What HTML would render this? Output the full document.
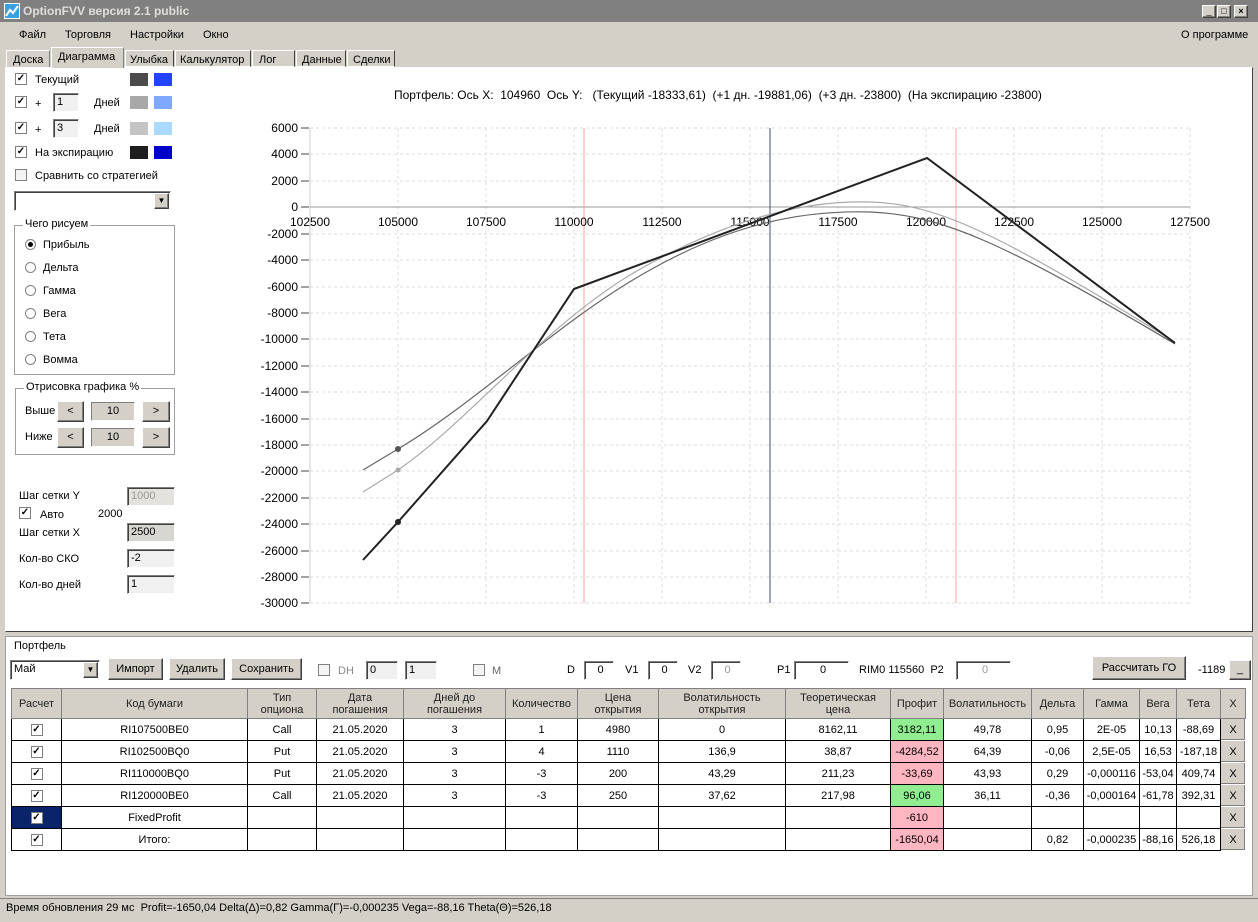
<!DOCTYPE html>
<html><head><meta charset="utf-8"><style>
*{box-sizing:border-box;margin:0;padding:0}
body{width:1258px;height:922px;background:#d4d0c8;font-family:"Liberation Sans",sans-serif;font-size:11px;color:#000;position:relative;overflow:hidden}
.a{position:absolute;white-space:nowrap}
.cb{position:absolute;width:12px;height:12px;border:1px solid #808080;background:#fff;font-size:10px;line-height:10px;text-align:center;font-weight:bold}
.rb{position:absolute;width:11px;height:11px;border:1px solid #808080;border-radius:50%;background:#fff}
.in{position:absolute;background:#fff;border:1px solid;border-color:#808080 #fff #fff #808080;box-shadow:inset 1px 1px 0 #404040;padding-left:3px;line-height:16px;height:19px}
.btn{position:absolute;background:#d4d0c8;border:1px solid;border-color:#fff #404040 #404040 #fff;box-shadow:inset -1px -1px 0 #808080;text-align:center}
.grp{position:absolute;border:1px solid #a0a0a0;box-shadow:1px 1px 0 #fff}
.grp span{position:absolute;top:-8px;left:8px;background:#fff;padding:0 2px}
table{border-collapse:collapse;position:absolute;left:11px;top:688px;table-layout:fixed;background:#fff}
td{border:1px solid #000;text-align:center;height:22px;font-size:11px;overflow:hidden;white-space:nowrap}
tr.h td{height:30px;background:#d4d0c8;border-color:#808080;line-height:12px;color:#222}
.g{background:#90ee90}.r{background:#ffb6c1}
.x{background:#d4d0c8;border:1px solid #fff;box-shadow:inset -1px -1px 0 #808080}
.tc{display:inline-block;width:12px;height:12px;border:1px solid #808080;background:#fff;font-size:10px;line-height:10px;font-weight:bold;color:#000;vertical-align:middle}
</style></head><body>
<div class="a" style="left:0;top:0;width:1258px;height:22px;background:#808080"></div>
<div class="a" style="left:4px;top:3px;width:16px;height:16px;background:#3aa0e0;border:1px solid #fff"><svg width="14" height="14"><polyline points="1,12 5,6 8,9 13,2" stroke="#fff" stroke-width="2" fill="none"/></svg></div>
<div class="a" style="left:23px;top:4px;color:#e0ddd6;font-weight:bold;font-size:12px">OptionFVV версия 2.1 public</div>
<div class="btn" style="left:1202px;top:5px;width:14px;height:13px;font-size:9px;line-height:10px">_</div>
<div class="btn" style="left:1217px;top:5px;width:14px;height:13px;font-size:9px;line-height:10px">□</div>
<div class="btn" style="left:1234px;top:5px;width:14px;height:13px;font-size:9px;line-height:11px;font-weight:bold">×</div>
<div class="a" style="left:19px;top:29px">Файл</div>
<div class="a" style="left:65px;top:29px">Торговля</div>
<div class="a" style="left:130px;top:29px">Настройки</div>
<div class="a" style="left:203px;top:29px">Окно</div>
<div class="a" style="left:1181px;top:29px">О программе</div>
<div class="a" style="left:6px;top:50px;width:44px;height:17px;border:1px solid #fff;border-bottom:0;border-right-color:#808080;padding:3px 0 0 6px">Доска</div>
<div class="a" style="left:51px;top:47px;width:73px;height:21px;border:1px solid #fff;border-bottom:0;border-right-color:#808080;background:#d4d0c8;padding:3px 0 0 6px;z-index:2">Диаграмма</div>
<div class="a" style="left:125px;top:50px;width:49px;height:17px;border:1px solid #fff;border-right-color:#404040;padding:3px 0 0 4px">Улыбка</div>
<div class="a" style="left:175px;top:50px;width:76px;height:17px;border:1px solid #fff;border-right-color:#404040;padding:3px 0 0 4px">Калькулятор</div>
<div class="a" style="left:252px;top:50px;width:43px;height:17px;border:1px solid #fff;border-right-color:#404040;padding:3px 0 0 6px">Лог</div>
<div class="a" style="left:296px;top:50px;width:50px;height:17px;border:1px solid #fff;border-right-color:#404040;padding:3px 0 0 5px">Данные</div>
<div class="a" style="left:347px;top:50px;width:48px;height:17px;border:1px solid #fff;border-right-color:#404040;padding:3px 0 0 5px">Сделки</div>
<div class="a" style="left:5px;top:67px;width:1248px;height:565px;background:#fff;border:1px solid;border-color:#fff #404040 #404040 #fff"></div>
<div class="cb" style="left:15px;top:73px">✓</div><div class="a" style="left:35px;top:74px">Текущий</div>
<div class="a" style="left:130px;top:73px;width:18px;height:13px;background:#4b4b4b"></div><div class="a" style="left:154px;top:73px;width:18px;height:13px;background:#2244ff"></div>
<div class="cb" style="left:15px;top:96px">✓</div><div class="a" style="left:35px;top:98px">+</div>
<div class="in" style="left:53px;top:93px;width:26px;background:#f0f0f0">1</div><div class="a" style="left:94px;top:97px">Дней</div>
<div class="a" style="left:130px;top:96px;width:18px;height:13px;background:#a8a8a8"></div><div class="a" style="left:154px;top:96px;width:18px;height:13px;background:#7fa8ff"></div>
<div class="cb" style="left:15px;top:122px">✓</div><div class="a" style="left:35px;top:124px">+</div>
<div class="in" style="left:53px;top:119px;width:26px;background:#f0f0f0">3</div><div class="a" style="left:94px;top:123px">Дней</div>
<div class="a" style="left:130px;top:122px;width:18px;height:13px;background:#c4c4c4"></div><div class="a" style="left:154px;top:122px;width:18px;height:13px;background:#aadaff"></div>
<div class="cb" style="left:15px;top:146px">✓</div><div class="a" style="left:35px;top:147px">На экспирацию</div>
<div class="a" style="left:130px;top:146px;width:18px;height:13px;background:#1e1e1e"></div><div class="a" style="left:154px;top:146px;width:18px;height:13px;background:#0000c8"></div>
<div class="cb" style="left:15px;top:169px;background:#f4f4f4"></div><div class="a" style="left:35px;top:170px">Сравнить со стратегией</div>
<div class="in" style="left:14px;top:191px;width:157px;height:20px;background:#fff"></div>
<div class="btn" style="left:154px;top:193px;width:15px;height:16px;font-size:8px;line-height:14px">▼</div>
<div class="grp" style="left:14px;top:225px;width:161px;height:150px"><span>Чего рисуем</span></div>
<div class="rb" style="left:25px;top:239px"><div style="width:5px;height:5px;background:#000;border-radius:50%;margin:2px"></div></div><div class="a" style="left:43px;top:239px">Прибыль</div>
<div class="rb" style="left:25px;top:262px"></div><div class="a" style="left:43px;top:262px">Дельта</div>
<div class="rb" style="left:25px;top:285px"></div><div class="a" style="left:43px;top:285px">Гамма</div>
<div class="rb" style="left:25px;top:308px"></div><div class="a" style="left:43px;top:308px">Вега</div>
<div class="rb" style="left:25px;top:331px"></div><div class="a" style="left:43px;top:331px">Тета</div>
<div class="rb" style="left:25px;top:354px"></div><div class="a" style="left:43px;top:354px">Вомма</div>
<div class="grp" style="left:15px;top:388px;width:160px;height:67px"><span>Отрисовка графика %</span></div>
<div class="a" style="left:25px;top:405px">Выше</div>
<div class="btn" style="left:57px;top:401px;width:27px;height:21px;line-height:18px">&lt;</div>
<div class="a" style="left:91px;top:402px;width:44px;height:19px;background:#d4d0c8;border:1px solid;border-color:#808080 #fff #fff #808080;text-align:center;line-height:17px">10</div>
<div class="btn" style="left:142px;top:401px;width:28px;height:21px;line-height:18px">&gt;</div>
<div class="a" style="left:25px;top:431px">Ниже</div>
<div class="btn" style="left:57px;top:427px;width:27px;height:21px;line-height:18px">&lt;</div>
<div class="a" style="left:91px;top:428px;width:44px;height:19px;background:#d4d0c8;border:1px solid;border-color:#808080 #fff #fff #808080;text-align:center;line-height:17px">10</div>
<div class="btn" style="left:142px;top:427px;width:28px;height:21px;line-height:18px">&gt;</div>
<div class="a" style="left:19px;top:490px">Шаг сетки Y</div>
<div class="in" style="left:127px;top:487px;width:48px;background:#e4e2dc;color:#999">1000</div>
<div class="cb" style="left:19px;top:507px">✓</div><div class="a" style="left:40px;top:509px">Авто</div><div class="a" style="left:98px;top:508px">2000</div>
<div class="a" style="left:19px;top:527px">Шаг сетки X</div>
<div class="in" style="left:127px;top:523px;width:48px;background:#d8d6d0">2500</div>
<div class="a" style="left:19px;top:553px">Кол-во СКО</div>
<div class="in" style="left:127px;top:549px;width:48px;background:#f0f0f0">-2</div>
<div class="a" style="left:19px;top:579px">Кол-во дней</div>
<div class="in" style="left:127px;top:575px;width:48px;background:#f0f0f0">1</div>
<div class="a" style="left:394px;top:88px;font-size:12px">Портфель: Ось X: &nbsp;104960 &nbsp;Ось Y: &nbsp;&nbsp;(Текущий -18333,61) &nbsp;(+1 дн. -19881,06) &nbsp;(+3 дн. -23800) &nbsp;(На экспирацию -23800)</div>
<svg class="a" style="left:0;top:0" width="1258" height="630" font-family="Liberation Sans" font-size="12">
<g stroke="#ddd" stroke-dasharray="3,3">
<line x1="398" y1="128" x2="398" y2="603"/><line x1="486" y1="128" x2="486" y2="603"/><line x1="574" y1="128" x2="574" y2="603"/><line x1="662" y1="128" x2="662" y2="603"/><line x1="750" y1="128" x2="750" y2="603"/><line x1="838" y1="128" x2="838" y2="603"/><line x1="926" y1="128" x2="926" y2="603"/><line x1="1014" y1="128" x2="1014" y2="603"/><line x1="1102" y1="128" x2="1102" y2="603"/><line x1="1190" y1="128" x2="1190" y2="603"/>
<line x1="310" y1="128" x2="1190" y2="128"/><line x1="310" y1="154" x2="1190" y2="154"/><line x1="310" y1="181" x2="1190" y2="181"/><line x1="310" y1="234" x2="1190" y2="234"/><line x1="310" y1="260" x2="1190" y2="260"/><line x1="310" y1="287" x2="1190" y2="287"/><line x1="310" y1="313" x2="1190" y2="313"/><line x1="310" y1="339" x2="1190" y2="339"/><line x1="310" y1="366" x2="1190" y2="366"/><line x1="310" y1="392" x2="1190" y2="392"/><line x1="310" y1="419" x2="1190" y2="419"/><line x1="310" y1="445" x2="1190" y2="445"/><line x1="310" y1="471" x2="1190" y2="471"/><line x1="310" y1="498" x2="1190" y2="498"/><line x1="310" y1="524" x2="1190" y2="524"/><line x1="310" y1="551" x2="1190" y2="551"/><line x1="310" y1="577" x2="1190" y2="577"/><line x1="310" y1="603" x2="1190" y2="603"/>
</g>
<line x1="310" y1="128" x2="310" y2="603" stroke="#ccc"/>
<g stroke="#444"><line x1="301" y1="128" x2="309" y2="128"/><line x1="301" y1="154" x2="309" y2="154"/><line x1="301" y1="181" x2="309" y2="181"/><line x1="301" y1="207" x2="309" y2="207"/><line x1="301" y1="234" x2="309" y2="234"/><line x1="301" y1="260" x2="309" y2="260"/><line x1="301" y1="287" x2="309" y2="287"/><line x1="301" y1="313" x2="309" y2="313"/><line x1="301" y1="339" x2="309" y2="339"/><line x1="301" y1="366" x2="309" y2="366"/><line x1="301" y1="392" x2="309" y2="392"/><line x1="301" y1="419" x2="309" y2="419"/><line x1="301" y1="445" x2="309" y2="445"/><line x1="301" y1="471" x2="309" y2="471"/><line x1="301" y1="498" x2="309" y2="498"/><line x1="301" y1="524" x2="309" y2="524"/><line x1="301" y1="551" x2="309" y2="551"/><line x1="301" y1="577" x2="309" y2="577"/><line x1="301" y1="603" x2="309" y2="603"/></g>
<line x1="310" y1="207" x2="1190" y2="207" stroke="#999"/>
<line x1="584" y1="128" x2="584" y2="603" stroke="#f4a0a0"/>
<line x1="956" y1="128" x2="956" y2="603" stroke="#f4a0a0"/>
<line x1="770" y1="128" x2="770" y2="603" stroke="#405070"/>
<g text-anchor="end" fill="#000">
<text x="298" y="132">6000</text><text x="298" y="158">4000</text><text x="298" y="185">2000</text><text x="298" y="211">0</text><text x="298" y="238">-2000</text><text x="298" y="264">-4000</text><text x="298" y="291">-6000</text><text x="298" y="317">-8000</text><text x="298" y="343">-10000</text><text x="298" y="370">-12000</text><text x="298" y="396">-14000</text><text x="298" y="423">-16000</text><text x="298" y="449">-18000</text><text x="298" y="475">-20000</text><text x="298" y="502">-22000</text><text x="298" y="528">-24000</text><text x="298" y="555">-26000</text><text x="298" y="581">-28000</text><text x="298" y="607">-30000</text>
</g>
<g text-anchor="middle"><text x="310" y="226">102500</text><text x="398" y="226">105000</text><text x="486" y="226">107500</text><text x="574" y="226">110000</text><text x="662" y="226">112500</text><text x="750" y="226">115000</text><text x="838" y="226">117500</text><text x="926" y="226">120000</text><text x="1014" y="226">122500</text><text x="1102" y="226">125000</text><text x="1190" y="226">127500</text></g>
<path d="M363,470 L398,449 C480,400 560,320 650,270 C730,225 800,210 870,212 C940,215 1000,240 1175,344" stroke="#666" fill="none" stroke-width="1.2"/>
<path d="M363,492 L398,470 C470,420 540,330 630,275 C720,222 800,200 870,202 C940,204 1000,235 1175,342" stroke="#aaa" fill="none" stroke-width="1.2"/>
<polyline points="363,560 398,522 487,421 574,289 927,158 1175,343" stroke="#222" fill="none" stroke-width="2"/>
<circle cx="398" cy="449" r="3" fill="#555"/><circle cx="398" cy="470" r="2.5" fill="#aaa"/><circle cx="398" cy="522" r="3" fill="#222"/>
</svg>
<div class="a" style="left:5px;top:636px;width:1248px;height:260px;background:#fff;border:1px solid #a0a0a0"></div>
<div class="a" style="left:11px;top:640px;background:#fff;padding:0 3px">Портфель</div>
<div class="in" style="left:10px;top:660px;width:90px;height:20px">Май</div>
<div class="btn" style="left:83px;top:662px;width:15px;height:16px;font-size:8px;line-height:14px">▼</div>
<div class="btn" style="left:108px;top:658px;width:55px;height:22px;line-height:20px">Импорт</div>
<div class="btn" style="left:169px;top:658px;width:56px;height:22px;line-height:20px">Удалить</div>
<div class="btn" style="left:231px;top:658px;width:71px;height:22px;line-height:20px">Сохранить</div>
<div class="cb" style="left:318px;top:664px;background:#f4f4f4"></div><div class="a" style="left:338px;top:665px;color:#888">DH</div>
<div class="in" style="left:366px;top:661px;width:32px;height:19px;background:#f0f0f0">0</div>
<div class="in" style="left:405px;top:661px;width:32px;height:19px;background:#f0f0f0">1</div>
<div class="cb" style="left:473px;top:664px;background:#f4f4f4"></div><div class="a" style="left:492px;top:665px;color:#666">M</div>
<div class="a" style="left:567px;top:664px">D</div><div class="in" style="left:584px;top:661px;width:30px;text-align:center">0</div>
<div class="a" style="left:625px;top:664px">V1</div><div class="in" style="left:648px;top:661px;width:30px;text-align:center">0</div>
<div class="a" style="left:688px;top:664px">V2</div><div class="in" style="left:711px;top:661px;width:30px;text-align:center;color:#999">0</div>
<div class="a" style="left:777px;top:664px">P1</div><div class="in" style="left:794px;top:661px;width:55px;text-align:center">0</div>
<div class="a" style="left:859px;top:664px">RIM0 115560 &nbsp;P2</div><div class="in" style="left:956px;top:661px;width:55px;text-align:center;color:#999">0</div>
<div class="btn" style="left:1092px;top:656px;width:94px;height:24px;line-height:22px">Рассчитать ГО</div>
<div class="a" style="left:1198px;top:664px">-1189</div>
<div class="btn" style="left:1229px;top:660px;width:22px;height:20px;line-height:16px">_</div>
<table>
<colgroup><col style="width:50px"><col style="width:186px"><col style="width:69px"><col style="width:87px"><col style="width:102px"><col style="width:72px"><col style="width:81px"><col style="width:127px"><col style="width:105px"><col style="width:53px"><col style="width:88px"><col style="width:52px"><col style="width:56px"><col style="width:37px"><col style="width:44px"><col style="width:25px"></colgroup>
<tr class="h"><td>Расчет</td><td>Код бумаги</td><td>Тип<br>опциона</td><td>Дата<br>погашения</td><td>Дней до<br>погашения</td><td>Количество</td><td>Цена<br>открытия</td><td>Волатильность<br>открытия</td><td>Теоретическая<br>цена</td><td>Профит</td><td>Волатильность</td><td>Дельта</td><td>Гамма</td><td>Вега</td><td>Тета</td><td>X</td></tr>
<tr><td><span class="tc">✓</span></td><td>RI107500BE0</td><td>Call</td><td>21.05.2020</td><td>3</td><td>1</td><td>4980</td><td>0</td><td>8162,11</td><td class="g">3182,11</td><td>49,78</td><td>0,95</td><td>2E-05</td><td>10,13</td><td>-88,69</td><td class="x">X</td></tr>
<tr><td><span class="tc">✓</span></td><td>RI102500BQ0</td><td>Put</td><td>21.05.2020</td><td>3</td><td>4</td><td>1110</td><td>136,9</td><td>38,87</td><td class="r">-4284,52</td><td>64,39</td><td>-0,06</td><td>2,5E-05</td><td>16,53</td><td>-187,18</td><td class="x">X</td></tr>
<tr><td><span class="tc">✓</span></td><td>RI110000BQ0</td><td>Put</td><td>21.05.2020</td><td>3</td><td>-3</td><td>200</td><td>43,29</td><td>211,23</td><td class="r">-33,69</td><td>43,93</td><td>0,29</td><td>-0,000116</td><td>-53,04</td><td>409,74</td><td class="x">X</td></tr>
<tr><td><span class="tc">✓</span></td><td>RI120000BE0</td><td>Call</td><td>21.05.2020</td><td>3</td><td>-3</td><td>250</td><td>37,62</td><td>217,98</td><td class="g">96,06</td><td>36,11</td><td>-0,36</td><td>-0,000164</td><td>-61,78</td><td>392,31</td><td class="x">X</td></tr>
<tr><td style="background:#0a246a"><span class="tc">✓</span></td><td>FixedProfit</td><td></td><td></td><td></td><td></td><td></td><td></td><td></td><td class="r">-610</td><td></td><td></td><td></td><td></td><td></td><td class="x">X</td></tr>
<tr><td><span class="tc">✓</span></td><td>Итого:</td><td></td><td></td><td></td><td></td><td></td><td></td><td></td><td class="r">-1650,04</td><td></td><td>0,82</td><td>-0,000235</td><td>-88,16</td><td>526,18</td><td class="x">X</td></tr>
</table>
<div class="a" style="left:0;top:898px;width:1258px;height:1px;background:#808080"></div>
<div class="a" style="left:6px;top:902px">Время обновления 29 мс &nbsp;Profit=-1650,04 Delta(Δ)=0,82 Gamma(Γ)=-0,000235 Vega=-88,16 Theta(Θ)=526,18</div>
</body></html>
